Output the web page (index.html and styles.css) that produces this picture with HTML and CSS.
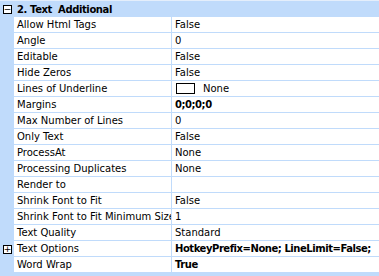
FILE: index.html
```html
<!DOCTYPE html>
<html>
<head>
<meta charset="utf-8">
<link rel="stylesheet" href="styles.css">
</head>
<body>
<div class="grid">
  <div class="cat">
    <span class="gut"><span class="box">&minus;</span></span>
    <span class="cat-title">2. Text&nbsp; Additional</span>
  </div>

  <div class="row"><span class="gut"></span><span class="name">Allow Html Tags</span><span class="val">False</span></div>
  <div class="row"><span class="gut"></span><span class="name">Angle</span><span class="val">0</span></div>
  <div class="row"><span class="gut"></span><span class="name">Editable</span><span class="val">False</span></div>
  <div class="row"><span class="gut"></span><span class="name">Hide Zeros</span><span class="val">False</span></div>
  <div class="row"><span class="gut"></span><span class="name">Lines of Underline</span><span class="val"><span class="swatch"></span>None</span></div>
  <div class="row"><span class="gut"></span><span class="name">Margins</span><span class="val b">0;0;0;0</span></div>
  <div class="row"><span class="gut"></span><span class="name">Max Number of Lines</span><span class="val">0</span></div>
  <div class="row"><span class="gut"></span><span class="name">Only Text</span><span class="val">False</span></div>
  <div class="row"><span class="gut"></span><span class="name">ProcessAt</span><span class="val">None</span></div>
  <div class="row"><span class="gut"></span><span class="name">Processing Duplicates</span><span class="val">None</span></div>
  <div class="row"><span class="gut"></span><span class="name">Render to</span><span class="val"></span></div>
  <div class="row"><span class="gut"></span><span class="name">Shrink Font to Fit</span><span class="val">False</span></div>
  <div class="row"><span class="gut"></span><span class="name">Shrink Font to Fit Minimum Size</span><span class="val">1</span></div>
  <div class="row"><span class="gut"></span><span class="name">Text Quality</span><span class="val">Standard</span></div>
  <div class="row"><span class="gut"><span class="box">+</span></span><span class="name">Text Options</span><span class="val b">HotkeyPrefix=None; LineLimit=False;</span></div>
  <div class="row"><span class="gut"></span><span class="name">Word Wrap</span><span class="val b">True</span></div>
  <div class="foot"></div>
</div>
</body>
</html>
```

FILE: styles.css
```css
html, body {
  margin: 0;
  padding: 0;
  background: #ffffff;
}

.grid {
  width: 379px;
  height: 276px;
  overflow: hidden;
  border-top: 1px solid #e4eefb;
  box-sizing: border-box;
  font-family: "DejaVu Sans", Verdana, sans-serif;
  font-size: 10px;
  color: #000000;
}

.cat {
  display: flex;
  height: 16px;
  background: #c0dbfb;
  align-items: center;
}

.cat-title {
  font-weight: bold;
  padding-left: 3px;
  white-space: pre;
  letter-spacing: -0.4px;
}

.row {
  display: grid;
  grid-template-columns: 14px 158px 1fr;
  height: 16px;
}

.gut {
  width: 14px;
  height: 16px;
  background: #c0dbfb;
  display: flex;
  align-items: center;
  justify-content: flex-start;
  padding-left: 3px;
  box-sizing: border-box;
  flex: none;
}

.box {
  width: 9px;
  height: 9px;
  box-sizing: border-box;
  border: 1px solid #000;
  background: #fff;
  display: flex;
  align-items: center;
  justify-content: center;
  font-size: 9px;
  line-height: 7px;
  font-family: "DejaVu Sans", sans-serif;
  font-weight: normal;
  letter-spacing: 0;
}

.name {
  border-bottom: 1px solid #c0dbfb;
  border-right: 1px solid #c0dbfb;
  padding-left: 3px;
  line-height: 15px;
  white-space: nowrap;
  overflow: hidden;
}

.val {
  border-bottom: 1px solid #c0dbfb;
  padding-left: 3px;
  line-height: 15px;
  white-space: nowrap;
  overflow: hidden;
  display: flex;
  align-items: center;
}

.b {
  font-weight: bold;
  letter-spacing: -0.45px;
}

.swatch {
  display: inline-block;
  width: 19px;
  height: 11px;
  box-sizing: border-box;
  border: 1px solid #000;
  background: #fff;
  margin-right: 8px;
  margin-left: 1px;
}

.foot {
  height: 4px;
  background: #c0dbfb;
}
```
